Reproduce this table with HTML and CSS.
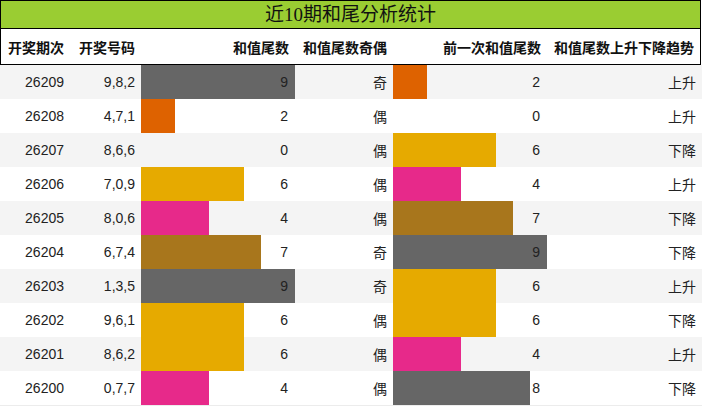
FILE: index.html
```html
<!DOCTYPE html>
<html lang="zh">
<head>
<meta charset="utf-8">
<title>近10期和尾分析统计</title>
<link rel="stylesheet" href="styles.css">
</head>
<body>
<div class="board">
  <div class="title">近10期和尾分析统计</div>
  <div class="row head">
    <div class="cell">开奖期次</div>
    <div class="cell">开奖号码</div>
    <div class="cell">和值尾数</div>
    <div class="cell">和值尾数奇偶</div>
    <div class="cell">前一次和值尾数</div>
    <div class="cell">和值尾数上升下降趋势</div>
  </div>
  <div class="rows">
    <div class="row">
      <div class="cell">26209</div><div class="cell">9,8,2</div>
      <div class="cell bar"><span class="fill c-gray" style="width:100%"></span><span class="num">9</span></div>
      <div class="cell">奇</div>
      <div class="cell bar"><span class="fill c-orange" style="width:22.22%"></span><span class="num">2</span></div>
      <div class="cell">上升</div>
    </div>
    <div class="row">
      <div class="cell">26208</div><div class="cell">4,7,1</div>
      <div class="cell bar"><span class="fill c-orange" style="width:22.22%"></span><span class="num">2</span></div>
      <div class="cell">偶</div>
      <div class="cell bar"><span class="fill" style="width:0%"></span><span class="num">0</span></div>
      <div class="cell">上升</div>
    </div>
    <div class="row">
      <div class="cell">26207</div><div class="cell">8,6,6</div>
      <div class="cell bar"><span class="fill" style="width:0%"></span><span class="num">0</span></div>
      <div class="cell">偶</div>
      <div class="cell bar"><span class="fill c-gold" style="width:66.67%"></span><span class="num">6</span></div>
      <div class="cell">下降</div>
    </div>
    <div class="row">
      <div class="cell">26206</div><div class="cell">7,0,9</div>
      <div class="cell bar"><span class="fill c-gold" style="width:66.67%"></span><span class="num">6</span></div>
      <div class="cell">偶</div>
      <div class="cell bar"><span class="fill c-pink" style="width:44.44%"></span><span class="num">4</span></div>
      <div class="cell">上升</div>
    </div>
    <div class="row">
      <div class="cell">26205</div><div class="cell">8,0,6</div>
      <div class="cell bar"><span class="fill c-pink" style="width:44.44%"></span><span class="num">4</span></div>
      <div class="cell">偶</div>
      <div class="cell bar"><span class="fill c-brown" style="width:77.78%"></span><span class="num">7</span></div>
      <div class="cell">下降</div>
    </div>
    <div class="row">
      <div class="cell">26204</div><div class="cell">6,7,4</div>
      <div class="cell bar"><span class="fill c-brown" style="width:77.78%"></span><span class="num">7</span></div>
      <div class="cell">奇</div>
      <div class="cell bar"><span class="fill c-gray" style="width:100%"></span><span class="num">9</span></div>
      <div class="cell">下降</div>
    </div>
    <div class="row">
      <div class="cell">26203</div><div class="cell">1,3,5</div>
      <div class="cell bar"><span class="fill c-gray" style="width:100%"></span><span class="num">9</span></div>
      <div class="cell">奇</div>
      <div class="cell bar"><span class="fill c-gold" style="width:66.67%"></span><span class="num">6</span></div>
      <div class="cell">上升</div>
    </div>
    <div class="row">
      <div class="cell">26202</div><div class="cell">9,6,1</div>
      <div class="cell bar"><span class="fill c-gold" style="width:66.67%"></span><span class="num">6</span></div>
      <div class="cell">偶</div>
      <div class="cell bar"><span class="fill c-gold" style="width:66.67%"></span><span class="num">6</span></div>
      <div class="cell">下降</div>
    </div>
    <div class="row">
      <div class="cell">26201</div><div class="cell">8,6,2</div>
      <div class="cell bar"><span class="fill c-gold" style="width:66.67%"></span><span class="num">6</span></div>
      <div class="cell">偶</div>
      <div class="cell bar"><span class="fill c-pink" style="width:44.44%"></span><span class="num">4</span></div>
      <div class="cell">上升</div>
    </div>
    <div class="row">
      <div class="cell">26200</div><div class="cell">0,7,7</div>
      <div class="cell bar"><span class="fill c-pink" style="width:44.44%"></span><span class="num">4</span></div>
      <div class="cell">偶</div>
      <div class="cell bar"><span class="fill c-gray" style="width:88.89%"></span><span class="num">8</span></div>
      <div class="cell">下降</div>
    </div>
  </div>
</div>
</body>
</html>
```
FILE: styles.css
```css
html, body {
  margin: 0;
  padding: 0;
  background: #ffffff;
}
.board {
  width: 702px;
  font-family: "Liberation Sans", "Noto Sans CJK SC", sans-serif;
  font-size: 14px;
  color: #222222;
}
.title {
  box-sizing: border-box;
  width: 701px;
  height: 29px;
  border: 1px solid #000000;
  background: #9acd32;
  font-family: "Liberation Serif", "Noto Sans CJK SC", serif;
  font-size: 19px;
  line-height: 27px;
  text-align: center;
  color: #111111;
}
.row {
  display: grid;
  grid-template-columns: 70px 71px 154px 98px 154px 1fr;
  height: 34px;
}
.head {
  box-sizing: border-box;
  width: 701px;
  height: 36px;
  border-left: 1px solid #000000;
  border-right: 1px solid #000000;
  border-bottom: 1px solid #000000;
  grid-template-columns: 69px 71px 154px 98px 154px 1fr;
  font-weight: bold;
  color: #111111;
}
.cell {
  display: flex;
  align-items: center;
  justify-content: flex-end;
  padding: 0 6px;
  white-space: nowrap;
}
.rows {
  border-bottom: 1px solid #ececec;
}
.rows .row:nth-child(odd) {
  background: #f4f4f4;
}
.rows .row:nth-child(even) {
  background: #ffffff;
}
.bar {
  display: grid;
  grid-template-columns: minmax(0, 1fr);
  grid-template-rows: 100%;
  padding: 0;
}
.fill {
  grid-area: 1 / 1;
  justify-self: start;
  align-self: stretch;
}
.num {
  grid-area: 1 / 1;
  justify-self: end;
  align-self: center;
  padding-right: 7px;
}
.c-gray { background: #666666; }
.c-orange { background: #de6200; }
.c-gold { background: #e6aa00; }
.c-pink { background: #e7298a; }
.c-brown { background: #a8761c; }
```
